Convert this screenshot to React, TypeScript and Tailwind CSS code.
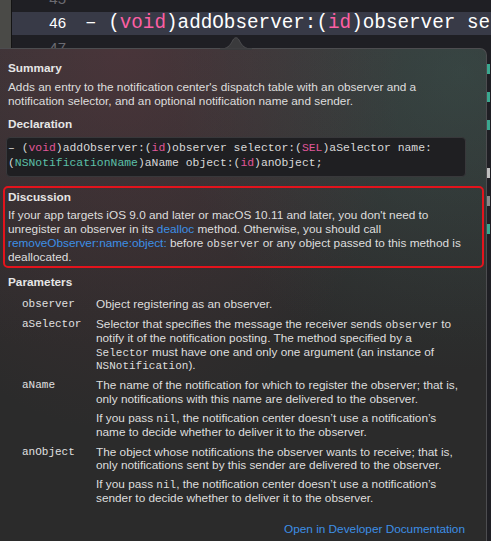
import type { ReactNode } from "react";

const Mono = ({ children }: { children: ReactNode }) => (
  <span className="font-['Liberation_Mono',monospace] text-[11px] leading-none">{children}</span>
);

const Kw = ({ children }: { children: ReactNode }) => (
  <span className="text-[#e0579a]">{children}</span>
);

const params: { name: string; paras: ReactNode[] }[] = [
  { name: "observer", paras: ["Object registering as an observer."] },
  {
    name: "aSelector",
    paras: [
      <>
        Selector that specifies the message the receiver sends <Mono>observer</Mono> to notify it
        of the notification posting. The method specified by a <Mono>Selector</Mono> must have one
        and only one argument (an instance of <Mono>NSNotification</Mono>).
      </>,
    ],
  },
  {
    name: "aName",
    paras: [
      "The name of the notification for which to register the observer; that is, only notifications with this name are delivered to the observer.",
      <>
        If you pass <Mono>nil</Mono>, the notification center doesn’t use a notification’s name to
        decide whether to deliver it to the observer.
      </>,
    ],
  },
  {
    name: "anObject",
    paras: [
      "The object whose notifications the observer wants to receive; that is, only notifications sent by this sender are delivered to the observer.",
      <>
        If you pass <Mono>nil</Mono>, the notification center doesn’t use a notification’s sender to
        decide whether to deliver it to the observer.
      </>,
    ],
  },
];

export default function App() {
  return (
    <div className="relative w-[491px] h-[541px] overflow-hidden bg-[#1f1f24] font-['Liberation_Sans',Arial,sans-serif]">
      {/* Editor behind the popover */}
      <div className="flex h-[48px]">
        <div className="w-[12px] shrink-0 bg-[#4a4a47] border-r border-[#141414]" />
        <div className="flex-1 flex flex-col">
          <div className="h-[12px] overflow-hidden">
            <div className="w-[54px] text-right text-[#6b6b72] text-[15px] leading-[15px] -mt-[9px]">45</div>
          </div>
          <div className="h-[23px] bg-[#383a47] flex items-center">
            <div className="w-[54px] shrink-0 text-white text-[15px] text-right">46</div>
            <div className="ml-[19px] text-white font-['Liberation_Mono',monospace] text-[19.3px] whitespace-nowrap">
              – (<span className="text-[#fc5fa3]">void</span>)addObserver:(<span className="text-[#fc5fa3]">id</span>)observer selector
            </div>
          </div>
          <div className="h-[13px] overflow-hidden">
            <div className="w-[54px] text-right text-[#6b6b72] text-[15px] leading-[15px] mt-[5px]">47</div>
          </div>
        </div>
      </div>

      {/* Popover arrow */}
      <svg className="absolute left-[220px] top-[36px]" width="32" height="14" viewBox="0 0 32 14">
        <path d="M0 13 C7 13 10 10 13 4 C14.5 1 17.5 1 19 4 C22 10 25 13 32 13 Z" fill="#3a3a3c" stroke="#4d4d50" strokeWidth="1" />
        <rect x="0" y="12.5" width="32" height="2" fill="#3a3a3c" />
      </svg>

      <div className="flex">
        {/* Popover */}
        <div className="w-[487px] h-[493px] shrink-0 rounded-tr-[7px] border-t border-r border-[#4d4d50] bg-[#2b2b2b] bg-[radial-gradient(ellipse_at_25%_0%,rgba(110,55,65,0.35),transparent_55%),radial-gradient(ellipse_at_95%_5%,rgba(60,100,90,0.35),transparent_45%),linear-gradient(to_bottom,#353436,#2b2b2b_60%)] text-[#dedede] text-[11.8px] leading-[13.7px] pl-[8px] pr-[21px] pt-[12px]">
          <h2 className="font-bold leading-[14px] text-[#e6e6e6]">Summary</h2>
          <p className="mt-[6px]">
            Adds an entry to the notification center's dispatch table with an observer and a
            notification selector, and an optional notification name and sender.
          </p>

          <h2 className="mt-[9px] font-bold leading-[14px] text-[#e6e6e6]">Declaration</h2>
          <div className="mt-[6px] -ml-[2px] w-[460px] h-[40px] rounded-[4px] bg-[#1f1f22] border border-[#38383b] pl-[1px] pt-[3px] font-['Liberation_Mono',monospace] text-[11.4px] leading-[15px] text-[#d8d8d8]">
            <div>
              – (<Kw>void</Kw>)addObserver:(<Kw>id</Kw>)observer selector:(<Kw>SEL</Kw>)aSelector name:
            </div>
            <div>
              (<span className="text-[#5cc0a8]">NSNotificationName</span>)aName object:(<Kw>id</Kw>)anObject;
            </div>
          </div>

          <div className="mt-[9px] -ml-[5px] w-[481px] h-[82px] border-2 border-[#e3131c] rounded-[5px] pl-[3px] pt-[2px]">
            <h2 className="font-bold leading-[14px] text-[#e6e6e6]">Discussion</h2>
            <p className="mt-[5px] pr-[10px]">
              If your app targets iOS 9.0 and later or macOS 10.11 and later, you don't need to
              unregister an observer in its <span className="text-[#3d8fe6]">dealloc</span> method.
              Otherwise, you should call{" "}
              <span className="text-[#3d8fe6]">removeObserver:name:object:</span> before{" "}
              <Mono>observer</Mono> or any object passed to this method is deallocated.
            </p>
          </div>

          <h2 className="mt-[7px] font-bold leading-[14px] text-[#e6e6e6]">Parameters</h2>
          <div className="mt-[8.5px] flex flex-col gap-[6.5px]">
            {params.map((p) => (
              <div key={p.name} className="flex">
                <div className="w-[88px] pl-[14px] shrink-0 font-['Liberation_Mono',monospace] text-[11px] text-[#e0e0e0]">
                  {p.name}
                </div>
                <div className="flex-1 flex flex-col gap-[5px]">
                  {p.paras.map((para, i) => (
                    <p key={i}>{para}</p>
                  ))}
                </div>
              </div>
            ))}
          </div>

          <div className="mt-[16px] flex justify-end">
            <span className="text-[#3d8fe6] leading-[14px]">Open in Developer Documentation</span>
          </div>
        </div>

        {/* Sliver of editor at the right edge */}
        <div className="flex-1 flex flex-col pt-[16px] gap-[18px]">
          <div className="h-[10px] w-[3px] bg-[#3aa88f]" />
          <div className="h-[10px] w-[3px] bg-[#3aa88f]" />
          <div className="h-[10px] w-[3px] bg-[#3aa88f]" />
          <div className="mt-[20px] h-[10px] w-[3px] bg-[#bfbfbf]" />
          <div className="h-[10px] w-[3px] bg-[#8a8a8a]" />
          <div className="h-[10px] w-[3px] bg-[#3aa88f]" />
        </div>
      </div>
    </div>
  );
}
